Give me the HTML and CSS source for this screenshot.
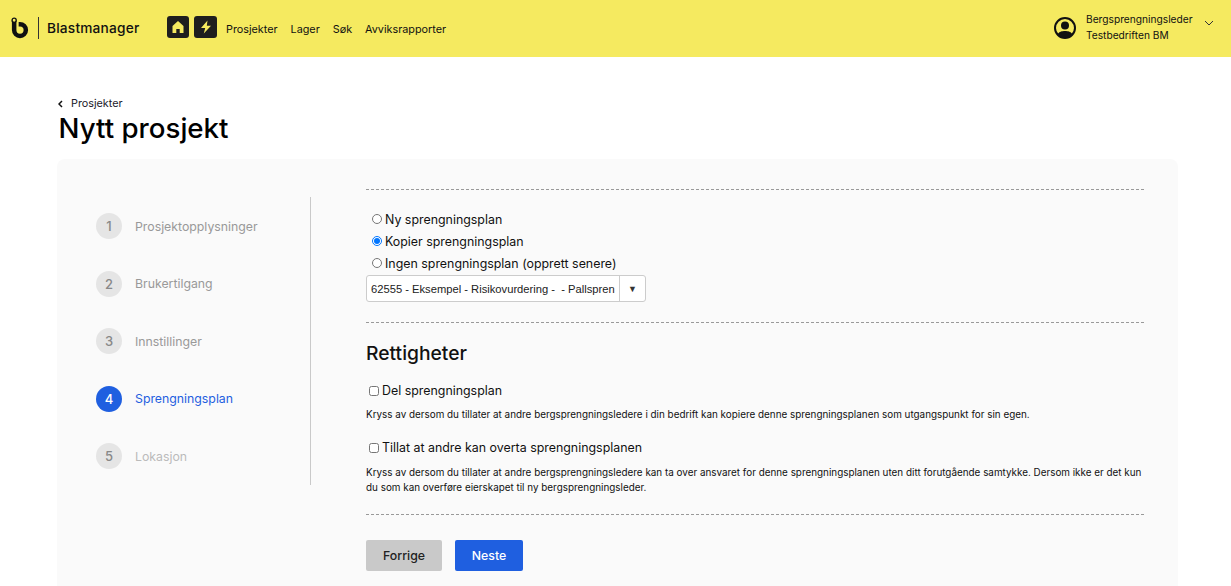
FILE: index.html
```html
<!DOCTYPE html>
<html lang="no">
<head>
<meta charset="utf-8">
<title>Nytt prosjekt</title>
<link rel="stylesheet" href="styles.css">
</head>
<body>
<header class="topbar">
  <div class="brand">
    <svg class="logo" width="18" height="22" viewBox="0 0 20 24.400"><path d="M3.500 4V14.500A6.500 6.500 0 1 0 10 8H8.500" fill="none" stroke="#111" stroke-width="5"/><circle cx="3.500" cy="3.600" r="2.300" fill="#f5ea60" stroke="#111" stroke-width="1.500"/><circle cx="10" cy="14.500" r="2" fill="#f5ea60"/></svg>
    <span class="brand-sep"></span>
    <span class="brand-name">Blastmanager</span>
  </div>
  <nav class="nav">
    <a class="nav-icon nav-icon-home"><svg width="14" height="14" viewBox="0 0 14 14"><path d="M7 1 1.500 6V13H5.300V9H8.700V13H12.500V6Z" fill="#f5ea60"/></svg></a>
    <a class="nav-icon nav-icon-bolt"><svg width="12" height="14" viewBox="0 0 12 14"><path d="M7.500 .5 1 8H5.200L3.800 13.500 11 5.800H6.800Z" fill="#f5ea60"/></svg></a>
    <a class="nav-link nav-first">Prosjekter</a>
    <a class="nav-link">Lager</a>
    <a class="nav-link">Søk</a>
    <a class="nav-link">Avviksrapporter</a>
  </nav>
  <div class="user">
    <svg width="24" height="24" viewBox="0 0 24 24"><circle cx="12" cy="12" r="10" fill="none" stroke="#111" stroke-width="2"/><circle cx="12" cy="9.500" r="4" fill="#111"/><path d="M4.500 18.500C6 15.500 9 15 12 15S18 15.500 19.500 18.500C17.500 21 15 22 12 22S6.500 21 4.500 18.500Z" fill="#111"/></svg>
    <div class="user-text"><span>Bergsprengningsleder</span><span>Testbedriften BM</span></div>
    <svg class="chev" width="10" height="6" viewBox="0 0 10 6"><path d="M1 1 5 5 9 1" fill="none" stroke="#333" stroke-width="1"/></svg>
  </div>
</header>
<main class="page">
  <a class="crumb"><svg width="5" height="8" viewBox="0 0 5 8"><path d="M4 1 1 4 4 7" fill="none" stroke="#111" stroke-width="1.500"/></svg>Prosjekter</a>
  <h1 class="title">Nytt prosjekt</h1>
  <section class="card">
    <aside class="steps">
      <div class="step"><span class="num">1</span><span class="label">Prosjektopplysninger</span></div>
      <div class="step"><span class="num">2</span><span class="label">Brukertilgang</span></div>
      <div class="step"><span class="num">3</span><span class="label">Innstillinger</span></div>
      <div class="step active"><span class="num">4</span><span class="label">Sprengningsplan</span></div>
      <div class="step upcoming"><span class="num">5</span><span class="label">Lokasjon</span></div>
    </aside>
    <div class="content">
      <div class="radios">
        <label class="radio"><input type="radio" name="plan">Ny sprengningsplan</label>
        <label class="radio"><input type="radio" name="plan" checked>Kopier sprengningsplan</label>
        <label class="radio"><input type="radio" name="plan">Ingen sprengningsplan (opprett senere)</label>
      </div>
      <div class="combo"><span class="combo-value">62555 - Eksempel - Risikovurdering - &nbsp;- Pallspren</span><span class="combo-arrow">▼</span></div>
      <div class="rights">
        <h2 class="subtitle">Rettigheter</h2>
        <label class="check"><input type="checkbox">Del sprengningsplan</label>
        <p class="help">Kryss av dersom du tillater at andre bergsprengningsledere i din bedrift kan kopiere denne sprengningsplanen som utgangspunkt for sin egen.</p>
        <label class="check check-second"><input type="checkbox">Tillat at andre kan overta sprengningsplanen</label>
        <p class="help help-second">Kryss av dersom du tillater at andre bergsprengningsledere kan ta over ansvaret for denne sprengningsplanen uten ditt forutgående samtykke. Dersom ikke er det kun du som kan overføre eierskapet til ny bergsprengningsleder.</p>
      </div>
      <div class="actions">
        <button class="btn btn-prev">Forrige</button>
        <button class="btn btn-next">Neste</button>
      </div>
    </div>
  </section>
</main>
</body>
</html>
```
FILE: styles.css
```css
* { box-sizing: border-box; }
html, body { height: 586px; overflow: hidden; }
body { margin: 0; background: #fff; color: #111; font-family: Inter, "Liberation Sans", sans-serif; }
.topbar { height: 57px; background: #f5ea60; display: flex; align-items: center; padding: 0 17px 0 11px; }
.brand { display: flex; align-items: center; width: 156px; margin-bottom: 2px; }
.logo { display: block; }
.brand-sep { width: 1px; height: 22px; background: #333; margin: 0 8px 0 9px; }
.brand-name { font-size: 13.700px; font-weight: 500; letter-spacing: .2px; }
.nav { display: flex; align-items: center; font-size: 10.800px; margin-bottom: 3px; }
.nav-icon { width: 22px; height: 22px; background: #1e1e1e; border-radius: 3px; display: flex; align-items: center; justify-content: center; }
.nav-icon-bolt { width: 23px; margin-left: 5px; }
.nav-link { margin-left: 13px; padding-top: 5px; color: #111; }
.nav-first { margin-left: 9px; }
.user { margin-left: auto; display: flex; align-items: center; margin-bottom: 2px; }
.user-text { display: flex; flex-direction: column; gap: 5px; font-size: 10.200px; line-height: 11px; margin-left: 9px; width: 118px; }
.chev { margin-bottom: 9px; }
.page { padding: 40px 53px 0 57px; }
.crumb { display: flex; align-items: center; gap: 8px; font-size: 10.800px; line-height: 14px; color: #1a1a2a; padding-left: 1px; }
.title { margin: -1px 0 13px 1.500px; font-size: 27.700px; line-height: 36px; font-weight: 500; color: #000; }
.card { background: #fafafa; border-radius: 8px 8px 0 0; display: flex; height: 427px; overflow: hidden; padding: 30px 34px 0 39px; }
.steps { width: 215px; height: 288px; margin-top: 8px; border-right: 1px solid #c9c9c9; padding-top: 16px; display: flex; flex-direction: column; gap: 31.500px; }
.step { display: flex; align-items: center; gap: 13px; font-size: 12.300px; color: #999; height: 26px; }
.num { width: 26px; height: 26px; border-radius: 50%; background: #e5e5e5; color: #888; display: flex; align-items: center; justify-content: center; font-weight: 500; font-size: 13px; }
.active .num { background: #1f5fe0; color: #fff; }
.active .label { color: #1f5fe0; }
.upcoming .label { color: #bbb; }
.content { margin-left: 55px; flex: 1; border-top: 1px dashed #999; }
.radios { padding-top: 18px; }
.radio { display: flex; align-items: center; height: 22px; font-size: 12.400px; }
.radio input { margin: 0 3px 0 6px; width: 10px; height: 10px; }
.combo { display: flex; align-items: center; width: 280px; height: 27px; margin-top: 1px; background: #fff; border: 1px solid #ccc; border-radius: 3px; font-family: "Liberation Sans", sans-serif; font-size: 11.200px; color: #222; overflow: hidden; }
.combo-value { width: 252px; padding-left: 4px; white-space: nowrap; overflow: hidden; }
.combo-arrow { flex: 1; height: 100%; border-left: 1px solid #ccc; display: flex; align-items: center; justify-content: center; font-size: 9px; color: #333; }
.rights { margin-top: 20px; border-top: 1px dashed #999; padding-top: 18px; }
.subtitle { margin: 0; font-size: 19.300px; line-height: 24px; font-weight: 500; }
.check { display: flex; align-items: center; font-size: 12.400px; line-height: 18px; margin-top: 17px; }
.check input { margin: 0 3px 0 3px; width: 10px; height: 10px; }
.check-second { margin-top: 17px; }
.help { margin: 6px 0 0; font-size: 9.900px; line-height: 16px; color: #111; }
.help-second { margin-top: 8px; line-height: 15px; }
.actions { margin-top: 19px; border-top: 1px dashed #999; padding-top: 25px; display: flex; gap: 13px; }
.btn { height: 31px; border: 0; border-radius: 2px; font-family: inherit; font-size: 12.300px; font-weight: 500; }
.btn-prev { width: 76px; background: #c9c9c9; color: #222; }
.btn-next { width: 68px; background: #1f5fe0; color: #fff; }
```
